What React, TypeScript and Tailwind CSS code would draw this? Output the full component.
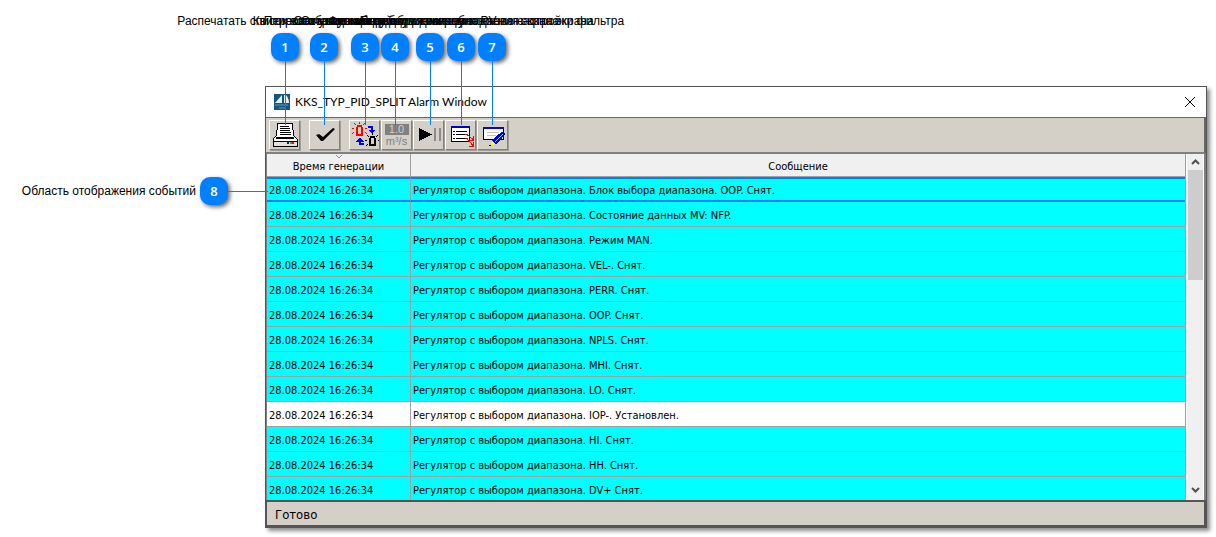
import type { ReactNode } from "react"

interface AlarmEvent {
  id: number
  time: string
  text: string
  active?: boolean
}

interface Callout {
  id: number
  x: number
  label: string
}

const PREFIX = "Регулятор с выбором диапазона. "

const messages = [
  "Блок выбора диапазона. OOP. Снят.",
  "Состояние данных MV: NFP.",
  "Режим MAN.",
  "VEL-. Снят.",
  "PERR. Снят.",
  "OOP. Снят.",
  "NPLS. Снят.",
  "MHI. Снят.",
  "LO. Снят.",
  "IOP-. Установлен.",
  "HI. Снят.",
  "HH. Снят.",
  "DV+ Снят.",
]

const events: AlarmEvent[] = messages.map((text, i) => ({
  id: i,
  time: "28.08.2024 16:26:34",
  text: PREFIX + text,
  active: text.startsWith("IOP-"),
}))

const callouts: Callout[] = [
  { id: 1, x: 285, label: "Распечатать список всех уведомлений" },
  { id: 2, x: 324, label: "Квитировать все события" },
  { id: 3, x: 365, label: "Переключение между двумя окнами" },
  { id: 4, x: 395, label: "Отображение единиц измерения PV" },
  { id: 5, x: 430, label: "Остановка/возобновление обновления экрана" },
  { id: 6, x: 461, label: "Функция отображения диалогового окна экрана" },
  { id: 7, x: 492, label: "Переход к диалогу задания настройки фильтра" },
]

function PrinterIcon() {
  return (
    <svg width="26" height="26" viewBox="0 0 26 26" shapeRendering="crispEdges">
      <path d="M6 1h14l2 14H4z" fill="#fff" stroke="#000" />
      <path d="M8 4.500h9M8 6.500h10M8 8.500h10M8 10.500h11M8 12.500h11" stroke="#000" />
      <path d="M4 14L1 17v7h24v-7l-3-3" fill="#fff" stroke="#000" />
      <path d="M4 16h18" stroke="#000" strokeWidth="2" />
      <path d="M1 19h24v5H1z" fill="#e4e1dc" stroke="#000" />
      <path d="M15 21h2" stroke="#00f" strokeWidth="2" />
      <path d="M18 21h2" stroke="#0c0" strokeWidth="2" />
      <path d="M20 21h2" stroke="#f00" strokeWidth="2" />
    </svg>
  )
}

function CheckIcon() {
  return (
    <svg width="28" height="28" viewBox="0 0 28 28">
      <path d="M5 14l3-1 4 3L22 7l2 1-12 12h-2z" fill="#000" />
    </svg>
  )
}

function SwapIcon() {
  return (
    <svg width="28" height="28" viewBox="0 0 28 28" shapeRendering="crispEdges" fill="none">
      <path d="M6 13V7l1-2h3l1 2v6M5 13.500h7" stroke="#f00" strokeWidth="2" />
      <path d="M8.500 1v2M3 2l2 2M14 2l-2 2M1 7.500h2M14 7.500h2M1 13l2-2M16 13l-2-2" stroke="#f00" />
      <path d="M19 24v-6l1-2h3l1 2v6M18 24h7" stroke="#000" strokeWidth="2" />
      <path d="M21.500 12v2M16 14l2 2M27 14l-2 2M14 19.500h2M27 19.500h1M15 25l2-2" stroke="#000" />
      <path d="M17 6h4v3" stroke="#00f" strokeWidth="2" />
      <path d="M17 8.500h8l-4 4z" fill="#00f" />
      <path d="M13 23H9v-3" stroke="#00f" strokeWidth="2" />
      <path d="M5 20.500h8l-4-4z" fill="#00f" />
    </svg>
  )
}

function UnitsIcon() {
  return (
    <span className="flex w-6 flex-col items-stretch text-center font-['Liberation_Sans',Arial,sans-serif] text-[#808080]">
      <span className="bg-[#808080] text-[11px] leading-[11px] text-[#d4d0c8]">1.0</span>
      <span className="text-[11px] leading-[12px]">m³/s</span>
    </span>
  )
}

function PlayPauseIcon() {
  return (
    <svg width="28" height="28" viewBox="0 0 28 28" shapeRendering="crispEdges">
      <path d="M4 7l13 6.500L4 20z" fill="#000" />
      <path d="M19 7h2v13h-2zM24 7h2v13h-2z" fill="#8c8c8c" />
    </svg>
  )
}

function ListIcon() {
  return (
    <svg width="28" height="28" viewBox="0 0 28 28" fill="none" shapeRendering="crispEdges">
      <path d="M4.500 5.500h18v15h-18z" fill="#fff" stroke="#000" />
      <path d="M4 6h19" stroke="#00c" strokeWidth="2" />
      <path d="M6 10.500h2M6 13.500h2M6 17.500h2" stroke="#000" />
      <path d="M9 10.500h11M9 13.500h11M9 17.500h11" stroke="#000" />
      <path d="M18 13.500h2l6 5M18 17.500h2l6 7" stroke="#f00" />
      <path d="M26.500 15v4H22M26.500 21v4H22" stroke="#f00" />
    </svg>
  )
}

function EditIcon() {
  return (
    <svg width="28" height="28" viewBox="0 0 28 28" fill="none" shapeRendering="crispEdges">
      <path d="M4.500 6.500h20v12h-20z" fill="#fff" stroke="#000" />
      <path d="M4 7h21" stroke="#00f" strokeWidth="2" />
      <path d="M8 11.500h12M8 14.500h9" stroke="#c0c0c0" />
      <path d="M23 11l3 2-9 10-4-3z" fill="#00f" stroke="#00c" />
      <path d="M24 13l-8 8" stroke="#8cf" />
      <path d="M13 20l3 3-5 2z" fill="#ff0" />
      <path d="M10 24.500h2" stroke="#000" />
    </svg>
  )
}

function ToolButton({ title, children }: { title: string; children: ReactNode }) {
  return (
    <button
      aria-label={title}
      className="flex h-[30px] w-[31px] shrink-0 items-center justify-center border border-t-white border-r-[#808080] border-b-[#808080] border-l-white bg-[#d4d0c8] shadow-[1px_1px_0_#a09d97]"
    >
      {children}
    </button>
  )
}

function Badge({ id }: { id: number }) {
  return (
    <span className="flex size-7 shrink-0 items-center justify-center rounded-[10px] bg-[#0080ff] font-['Open_Sans',sans-serif] text-[13px] font-semibold text-white shadow-[2px_2px_4px_rgba(0,0,0,0.6)]">
      {id}
    </span>
  )
}

function Scrollbar() {
  return (
    <div className="flex w-[19px] shrink-0 flex-col items-center border-l border-[#a0a0a0] bg-[#f0f0f0] shadow-[inset_1px_0_0_#fff,inset_-1px_0_0_#fff]">
      <button aria-label="Вверх" className="flex h-4 w-full items-center justify-center">
        <svg width="9" height="6" viewBox="0 0 9 6" fill="none">
          <path d="M1 5l3.500-3.500L8 5" stroke="#505050" strokeWidth="2" />
        </svg>
      </button>
      <div className="h-[110px] w-[15px] bg-[#cdcdcd]" />
      <button aria-label="Вниз" className="mt-auto flex h-5 w-full items-center justify-center">
        <svg width="9" height="6" viewBox="0 0 9 6" fill="none">
          <path d="M1 1l3.500 3.500L8 1" stroke="#505050" strokeWidth="2" />
        </svg>
      </button>
    </div>
  )
}

function EventTable() {
  return (
    <table className="w-full table-fixed border-separate border-spacing-0 text-[11px] leading-[14px] text-black">
      <colgroup>
        <col className="w-36" />
        <col />
      </colgroup>
      <thead>
        <tr className="h-[23px] bg-[#f0f0f0]">
          <th className="relative border-r border-b border-[#a0a0a0] p-0 pt-1 font-normal">
            Время генерации
            <svg className="absolute top-0 left-1/2 -ml-1" width="8" height="5" viewBox="0 0 8 5" fill="none">
              <path d="M1 1l3 3 3-3" stroke="#909090" />
            </svg>
          </th>
          <th className="border-b border-[#a0a0a0] p-0 pt-1 font-normal">Сообщение</th>
        </tr>
      </thead>
      <tbody>
        {events.map((event, i) => {
          const last = i === events.length - 1
          const cell =
            i === 0
              ? "border-y-2 border-y-[#0080ff] pt-0.5"
              : last
                ? "pt-1"
                : "border-b border-b-[#a0a0a0] pt-1"
          return (
            <tr key={event.id} className={`${last ? "h-[23px]" : "h-[25px]"} ${event.active ? "bg-white" : "bg-[#00ffff]"}`}>
              <td className={`border-r border-r-[#a0a0a0] pr-0 pb-0 pl-0.5 whitespace-nowrap ${cell}`}>{event.time}</td>
              <td className={`pr-0 pb-0 pl-0.5 whitespace-nowrap ${cell}`}>{event.text}</td>
            </tr>
          )
        })}
      </tbody>
    </table>
  )
}

export default function App() {
  return (
    <div className="relative overflow-hidden bg-white pt-[86px] pr-[9px] pb-[9px] pl-[265px] text-black">
      <main className="border border-[#555] bg-white font-['DejaVu_Sans_Condensed','DejaVu_Sans',sans-serif] shadow-[3px_3px_4px_rgba(0,0,0,0.45)]">
        <header className="flex h-[30px] items-center pr-2 pl-2">
          <svg width="16" height="16" viewBox="0 0 16 16">
            <path d="M0 0h16v16H0z" fill="#15577c" />
            <path d="M1 9l7-8v8zM10 1h2c2 2 3 5 3 8h-5z" fill="#e5f0f5" />
            <path d="M1 11h13M5 14h6" stroke="#6b9bb5" />
          </svg>
          <h1 className="ml-[5px] font-[Lato,sans-serif] text-[12px] leading-4">KKS_TYP_PID_SPLIT Alarm Window</h1>
          <button aria-label="Закрыть" className="ml-auto flex size-4 items-center justify-center">
            <svg width="12" height="12" viewBox="0 0 12 12">
              <path d="M1 1l10 10M11 1L1 11" stroke="#000" />
            </svg>
          </button>
        </header>

        <div className="flex gap-[9px] border-t border-r-2 border-b-2 border-t-[#666] border-r-[#666] border-b-[#808080] bg-[#d4d0c8] pt-[2px] pb-[2px] pl-[3px]">
          <ToolButton title="Печать"><PrinterIcon /></ToolButton>
          <ToolButton title="Квитировать"><CheckIcon /></ToolButton>
          <div className="flex gap-px">
            <ToolButton title="Переключить"><SwapIcon /></ToolButton>
            <ToolButton title="Единицы измерения"><UnitsIcon /></ToolButton>
            <ToolButton title="Пауза"><PlayPauseIcon /></ToolButton>
            <ToolButton title="Список"><ListIcon /></ToolButton>
            <ToolButton title="Настройка"><EditIcon /></ToolButton>
          </div>
        </div>

        <div className="flex border-r-2 border-l border-r-[#808080] border-l-[#808080]">
          <div className="min-w-0 flex-1">
            <EventTable />
          </div>
          <Scrollbar />
        </div>

        <footer className="border-t-2 border-r-2 border-b-2 border-l border-[#555] bg-[#d4d0c8] pt-0.5 pl-2 text-[13px] leading-[21px]">
          Готово
        </footer>
      </main>

      {/* numbered pins over the window */}
      <div className="pointer-events-none font-['Liberation_Sans',Arial,sans-serif] text-[12px] leading-4">
        {callouts.map((c) => (
          <div key={c.id} className="absolute top-[13px] flex w-0 flex-col items-center" style={{ left: c.x }}>
            <span className="mb-1 whitespace-nowrap">{c.label}</span>
            <Badge id={c.id} />
            <span className="ml-px h-16 w-px bg-[#0080ff]" />
          </div>
        ))}
        <div className="absolute top-[177px] left-3 flex items-center">
          <span className="w-[188px] pr-1 text-right whitespace-nowrap">Область отображения событий</span>
          <Badge id={8} />
          <span className="h-px w-10 bg-[#0080ff]" />
        </div>
      </div>
    </div>
  )
}
